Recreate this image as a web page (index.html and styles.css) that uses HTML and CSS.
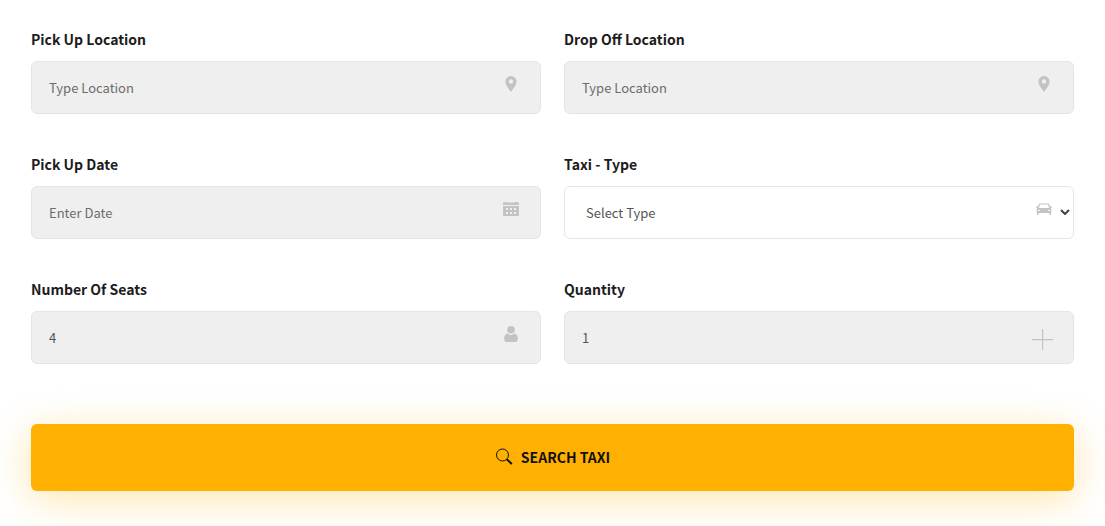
FILE: index.html
```html
<!DOCTYPE html>
<html lang="en">
  <head>
    <meta charset="utf-8">
    <meta name="viewport" content="width=device-width, initial-scale=1">
    <title>Search Taxi</title>
    <link rel="stylesheet" href="styles.css">
  </head>
  <body>
    <form class="booking-form">
      <div class="form-grid">
        <div class="form-group">
          <label for="pickup">Pick Up Location</label>
          <div class="field">
            <input id="pickup" type="text" placeholder="Type Location">
            <svg class="icon" viewBox="0 0 16 16"><path fill-rule="evenodd" d="M8 0a5.600 5.600 0 0 0-5.600 5.600C2.400 9 5.500 12.500 8 16c2.500-3.500 5.600-7 5.600-10.400A5.600 5.600 0 0 0 8 0zm0 3.300a2.200 2.200 0 1 1 0 4.400 2.200 2.200 0 0 1 0-4.400z"/></svg>
          </div>
        </div>
        <div class="form-group">
          <label for="dropoff">Drop Off Location</label>
          <div class="field">
            <input id="dropoff" type="text" placeholder="Type Location">
            <svg class="icon" viewBox="0 0 16 16"><path fill-rule="evenodd" d="M8 0a5.600 5.600 0 0 0-5.600 5.600C2.400 9 5.500 12.500 8 16c2.500-3.500 5.600-7 5.600-10.400A5.600 5.600 0 0 0 8 0zm0 3.300a2.200 2.200 0 1 1 0 4.400 2.200 2.200 0 0 1 0-4.400z"/></svg>
          </div>
        </div>
        <div class="form-group">
          <label for="date">Pick Up Date</label>
          <div class="field">
            <input id="date" type="text" placeholder="Enter Date">
            <svg class="icon" viewBox="0 0 16 16"><path fill-rule="evenodd" d="M0 1.500h2V1h2v.5h8V1h2v.5h2V4H0zM0 5h16v9a1 1 0 0 1-1 1H1a1 1 0 0 1-1-1zm3 2v2h2V7zm4 0v2h2V7zm4 0v2h2V7zm-8 4v2h2v-2zm4 0v2h2v-2zm4 0v2h2v-2z"/></svg>
          </div>
        </div>
        <div class="form-group">
          <label for="type">Taxi - Type</label>
          <div class="field">
            <select id="type">
              <option>Select Type</option>
              <option>Hybrid Taxi</option>
              <option>Town Taxi</option>
              <option>Limousine Taxi</option>
            </select>
            <svg class="icon" viewBox="0 0 16 16"><path fill-rule="evenodd" d="M3.800 2.500h8.400c.5 0 .9.300 1 .8l.9 2.700.4-.7H16v.9l-1.200.6c.3.500.4 1 .4 1.500V13.500h-2.200v-1.600H3v1.600H.8V8.300c0-.5.1-1 .4-1.500L0 6.200v-.9h1.500l.4.700.9-2.700c.1-.5.500-.8 1-.8zm.2 1L3 7h10l-1-3.500zM2.200 8.800v1.200h2.200l-.6-1zm11.600 0v1.200h-2.200l.6-1z"/></svg>
            <svg class="arrow" viewBox="0 0 10 6"><path d="M1 1l4 4 4-4"/></svg>
          </div>
        </div>
        <div class="form-group">
          <label for="seats">Number Of Seats</label>
          <div class="field">
            <input id="seats" type="text" value="4">
            <svg class="icon" viewBox="0 0 16 16"><circle cx="8" cy="3.800" r="3.800"/><path d="M4.500 7.500a5 5 0 0 0 7 0c2 .5 3.300 2.300 3.300 4.700v1.300c0 1.500-1 2.500-2.500 2.500H3.700c-1.500 0-2.500-1-2.500-2.500v-1.300c0-2.400 1.300-4.200 3.300-4.700z"/></svg>
          </div>
        </div>
        <div class="form-group">
          <label for="quantity">Quantity</label>
          <div class="field">
            <input id="quantity" type="text" value="1">
            <svg class="icon icon-plus" viewBox="0 0 22 22"><path d="M10 0h1.200v10h10v1.200h-10V21H10v-9.800H0V10h10z"/></svg>
          </div>
        </div>
      </div>
      <button class="search-btn" type="submit">
        <svg class="search-icon" viewBox="0 0 18 18"><circle cx="7.500" cy="7" r="6"/><path class="handle" d="M11.800 11.300l5 4.700"/></svg>
        <span>Search Taxi</span>
      </button>
    </form>
  </body>
</html>
```
FILE: styles.css
```css
* {
  box-sizing: border-box;
}

body {
  margin: 0;
  background-color: #fff;
  font-family: "Noto Sans CJK SC", "Open Sans", sans-serif;
  font-size: 14px;
  line-height: 24px;
}

.booking-form {
  padding: 27px 31px 35px;
}

.form-grid {
  display: grid;
  grid-template-columns: 1fr 1fr;
  gap: 38px 23px;
}

.form-group label {
  display: block;
  margin-bottom: 10px;
  color: #1c1c1c;
  font-weight: 700;
}

.field {
  position: relative;
}

.field input,
.field select {
  display: block;
  width: 100%;
  height: 53px;
  padding: 0 17px 1px;
  border: 1px solid #e5e5e5;
  border-radius: 6px;
  background-color: #efefef;
  color: #555;
  font: inherit;
  font-size: 13px;
  outline: none;
}

.field input::placeholder {
  color: #6c6c6c;
  opacity: 1;
}

.field select {
  appearance: none;
  padding: 0 21px;
  background-color: #fff;
}

.icon {
  position: absolute;
  top: 15px;
  right: 22px;
  width: 16px;
  height: 16px;
  fill: #c3c3c3;
  pointer-events: none;
}

.icon-plus {
  top: 18px;
  right: 20px;
  width: 22px;
  height: 22px;
}

.arrow {
  position: absolute;
  top: 23px;
  right: 4px;
  width: 10px;
  height: 6px;
  fill: none;
  stroke: #444;
  stroke-width: 2;
  pointer-events: none;
}

.search-btn {
  display: flex;
  align-items: center;
  justify-content: center;
  gap: 8px;
  width: 100%;
  height: 67px;
  margin-top: 60px;
  padding: 0 0 1px;
  border: 0;
  border-radius: 6px;
  background-color: #ffb000;
  box-shadow: 0 8px 40px rgba(255, 176, 0, 0.33);
  color: #111;
  font: inherit;
  font-weight: 700;
  text-transform: uppercase;
  cursor: pointer;
}

.search-icon {
  width: 18px;
  height: 18px;
  fill: none;
  stroke: #111;
  stroke-width: 1;
}

.search-icon .handle {
  stroke-width: 2;
}
```
